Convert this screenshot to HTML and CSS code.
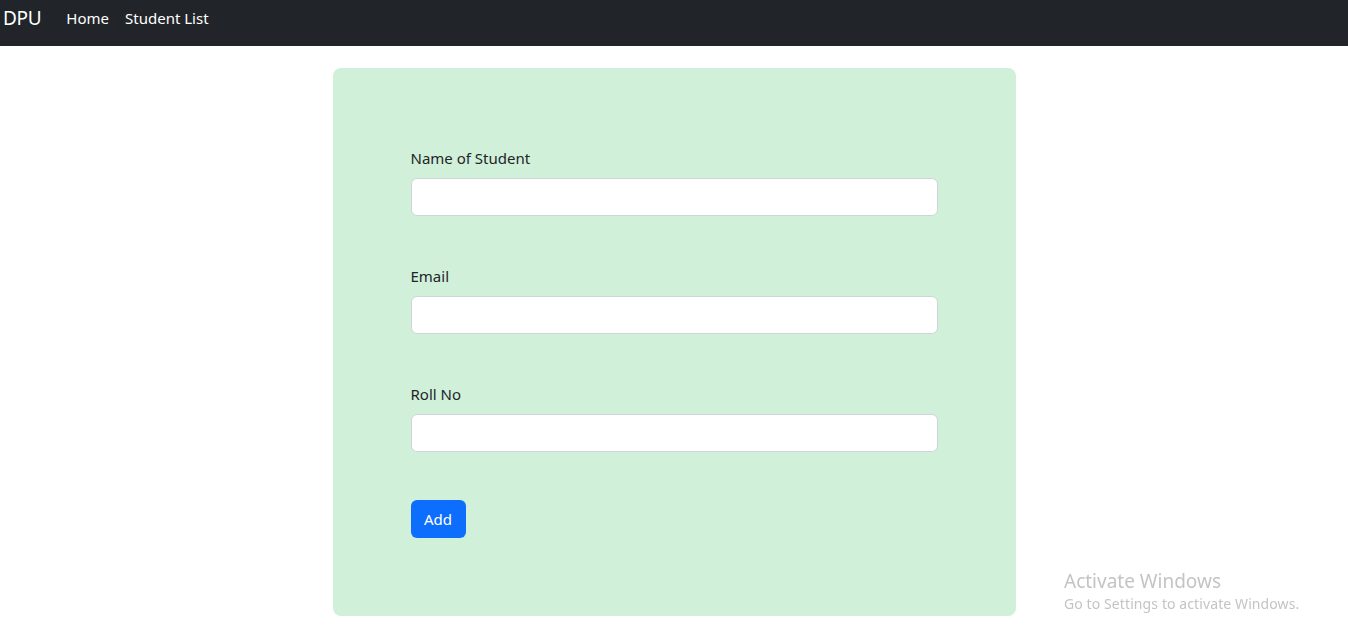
FILE: index.html
```html
<!DOCTYPE html>
<html lang="en">
<head>
<meta charset="utf-8">
<title>DPU</title>
<link rel="stylesheet" href="styles.css">
</head>
<body>
<nav class="navbar">
  <a class="brand" href="#">DPU</a>
  <ul class="nav-links">
    <li><a href="#">Home</a></li>
    <li><a href="#">Student List</a></li>
  </ul>
</nav>
<main class="page">
  <form class="card">
    <div class="field">
      <label class="label" for="name">Name of Student</label>
      <input class="input" id="name" type="text">
    </div>
    <div class="field">
      <label class="label" for="email">Email</label>
      <input class="input" id="email" type="email">
    </div>
    <div class="field">
      <label class="label" for="roll">Roll No</label>
      <input class="input" id="roll" type="text">
    </div>
    <div class="actions">
      <button class="btn" type="button">Add</button>
    </div>
  </form>
</main>
<div class="watermark">
  <div class="wm-title">Activate Windows</div>
  <div class="wm-sub">Go to Settings to activate Windows.</div>
</div>
</body>
</html>
```
FILE: styles.css
```css
* { box-sizing: border-box; }
html, body { margin: 0; padding: 0; }
body {
  font-family: "Noto Sans", "Open Sans", sans-serif;
  font-size: 16px;
  line-height: 24px;
  color: #212529;
  background: #fff;
}
.navbar {
  height: 46px;
  background: #212529;
  display: flex;
  align-items: center;
  padding: 0 0 10px 3px;
}
.brand {
  color: #fff;
  text-decoration: none;
  font-size: 19px;
  margin-right: 25px;
  letter-spacing: -0.3px;
}
.nav-links {
  list-style: none;
  display: flex;
  gap: 16px;
  margin: 0;
  padding: 0;
}
.nav-links a {
  color: #fff;
  text-decoration: none;
  font-size: 15px;
}
.page {
  padding-top: 22px;
  display: flex;
  justify-content: center;
}
.card {
  width: 683px;
  background: #d1f0d9;
  border-radius: 8px;
  padding: 78px 78px 78px;
  display: flex;
  flex-direction: column;
  gap: 48px;
}
.field { display: flex; flex-direction: column; }
.label {
  font-size: 15px;
  margin-bottom: 8px;
  color: #212529;
}
.input {
  height: 38px;
  border: 1px solid #ced4da;
  border-radius: 6px;
  background: #fff;
  font: inherit;
  padding: 6px 12px;
}
.actions { display: flex; }
.btn {
  height: 38px;
  width: 55px;
  background: #0d6efd;
  color: #fff;
  border: 0;
  border-radius: 6px;
  font-family: inherit;
  font-size: 15px;
  padding: 0;
}
.watermark {
  position: fixed;
  left: 1064px;
  top: 569px;
  color: #c4c4c4;
}
.wm-title { font-size: 19px; line-height: 24px; }
.wm-sub { font-size: 14px; line-height: 20px; letter-spacing: 0.1px; margin-top: 1px; }
```
